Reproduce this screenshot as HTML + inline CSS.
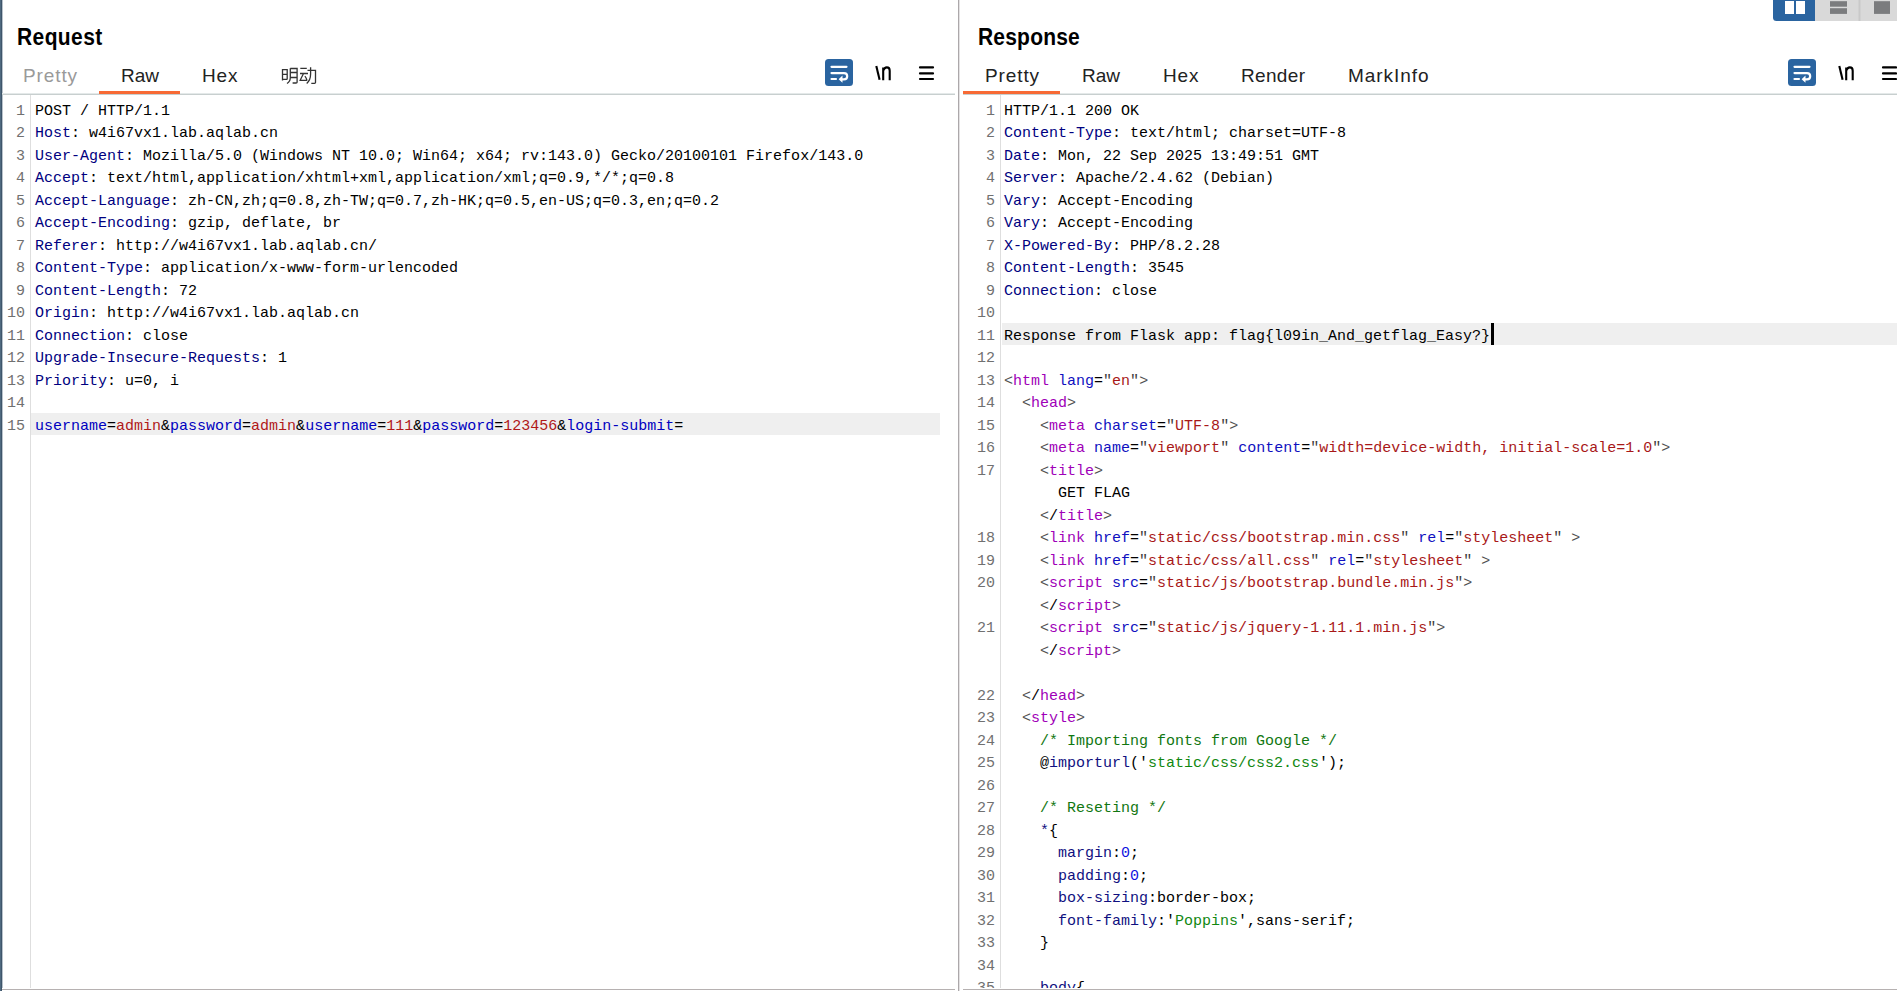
<!DOCTYPE html>
<html><head><meta charset="utf-8">
<style>
*{margin:0;padding:0;box-sizing:border-box}
html,body{width:1897px;height:991px;overflow:hidden;background:#fff}
body{position:relative;font-family:"Liberation Sans",sans-serif;color:#000}
.abs{position:absolute}
.strip{left:0;top:0;width:3px;height:991px;background:linear-gradient(to right,#506a80 0,#506a80 1px,#3f566b 1px,#3f566b 2px,#b9c3cc 2px,#b9c3cc 3px)}
.title{font-weight:bold;font-size:21px;letter-spacing:0.4px;transform:scaleY(1.1);transform-origin:0 0;line-height:22px;white-space:nowrap}
.tab{font-size:19px;line-height:20px;white-space:nowrap;color:#222}
.uline{height:3px;background:#f76a35}
.sep{height:2px;background:linear-gradient(#e4e9e9 50%,#c8cfcf 50%)}
.vdiv{left:958px;top:0;width:1px;height:991px;background:#aca8aa;box-shadow:1px 0 0 #e4e2e3}
.gutter{width:1px;background:#dedede}
.code{font-family:"Liberation Mono",monospace;font-size:15px;line-height:22.5px;white-space:pre;color:#000}
.ln{font-family:"Liberation Mono",monospace;font-size:15px;line-height:22.5px;white-space:pre;color:#707070;text-align:right}
.hl{background:#efefef;height:22px}
.bot{height:1px;background:#b6b1b1}
.h{color:#000080}
.pn{color:#0000c0}
.pv{color:#b01818}
.tg{color:#a000b8}
.br{color:#505050}
.q{color:#404040}
.an{color:#1010c0}
.av{color:#a81818}
.cm{color:#117711}
.cp{color:#101080}
.nb{color:#1010e0}
.st{color:#118811}
</style></head>
<body>
<div class="abs strip"></div>

<!-- LEFT PANEL -->
<div class="abs title" style="left:17px;top:25px">Request</div>
<div class="abs tab" style="left:23px;top:66px;color:#9a9a9a;letter-spacing:0.9px">Pretty</div>
<div class="abs tab" style="left:121px;top:66px">Raw</div>
<div class="abs tab" style="left:202px;top:66px;letter-spacing:0.8px">Hex</div>
<div class="abs uline" style="left:99px;top:91px;width:81px;z-index:2"></div>
<div class="abs sep" style="left:2px;top:93px;width:953px"></div>

<div class="abs gutter" style="left:30px;top:95px;height:893px"></div>
<div class="abs hl" style="left:31px;top:413px;width:909px"></div>
<div class="abs ln" style="left:0;top:100.5px;width:25px">1
2
3
4
5
6
7
8
9
10
11
12
13
14
15</div>
<div class="abs code" style="left:35px;top:100.5px">POST / HTTP/1.1
<span class="h">Host</span>: w4i67vx1.lab.aqlab.cn
<span class="h">User-Agent</span>: Mozilla/5.0 (Windows NT 10.0; Win64; x64; rv:143.0) Gecko/20100101 Firefox/143.0
<span class="h">Accept</span>: text/html,application/xhtml+xml,application/xml;q=0.9,*/*;q=0.8
<span class="h">Accept-Language</span>: zh-CN,zh;q=0.8,zh-TW;q=0.7,zh-HK;q=0.5,en-US;q=0.3,en;q=0.2
<span class="h">Accept-Encoding</span>: gzip, deflate, br
<span class="h">Referer</span>: http://w4i67vx1.lab.aqlab.cn/
<span class="h">Content-Type</span>: application/x-www-form-urlencoded
<span class="h">Content-Length</span>: 72
<span class="h">Origin</span>: http://w4i67vx1.lab.aqlab.cn
<span class="h">Connection</span>: close
<span class="h">Upgrade-Insecure-Requests</span>: 1
<span class="h">Priority</span>: u=0, i

<span class="pn">username</span>=<span class="pv">admin</span>&amp;<span class="pn">password</span>=<span class="pv">admin</span>&amp;<span class="pn">username</span>=<span class="pv">111</span>&amp;<span class="pn">password</span>=<span class="pv">123456</span>&amp;<span class="pn">login-submit</span>=</div>

<div class="abs vdiv" style="z-index:7"></div>
<div class="abs" style="left:2px;top:988px;width:1895px;height:3px;background:#fff;z-index:5"></div>
<div class="abs bot" style="left:2px;top:989px;width:953px;z-index:6"></div>
<div class="abs bot" style="left:963px;top:989px;width:934px;z-index:6"></div>

<!-- RIGHT PANEL -->
<div class="abs title" style="left:978px;top:25px;letter-spacing:0.2px">Response</div>
<div class="abs tab" style="left:985px;top:66px;letter-spacing:0.9px">Pretty</div>
<div class="abs tab" style="left:1082px;top:66px">Raw</div>
<div class="abs tab" style="left:1163px;top:66px;letter-spacing:0.8px">Hex</div>
<div class="abs tab" style="left:1241px;top:66px;letter-spacing:0.34px">Render</div>
<div class="abs tab" style="left:1348px;top:66px;letter-spacing:0.94px">MarkInfo</div>
<div class="abs uline" style="left:963px;top:91px;width:97px;z-index:2"></div>
<div class="abs sep" style="left:963px;top:93px;width:934px"></div>
<div class="abs gutter" style="left:1000px;top:95px;height:893px"></div>
<div class="abs hl" style="left:1002px;top:323px;width:895px"></div>
<div class="abs" style="left:1491px;top:323px;width:3px;height:22px;background:#000"></div>
<div class="abs ln" style="left:960px;top:100.5px;width:35px">1
2
3
4
5
6
7
8
9
10
11
12
13
14
15
16
17


18
19
20

21


22
23
24
25
26
27
28
29
30
31
32
33
34
35</div>
<div class="abs code" style="left:1004px;top:100.5px">HTTP/1.1 200 OK
<span class="h">Content-Type</span>: text/html; charset=UTF-8
<span class="h">Date</span>: Mon, 22 Sep 2025 13:49:51 GMT
<span class="h">Server</span>: Apache/2.4.62 (Debian)
<span class="h">Vary</span>: Accept-Encoding
<span class="h">Vary</span>: Accept-Encoding
<span class="h">X-Powered-By</span>: PHP/8.2.28
<span class="h">Content-Length</span>: 3545
<span class="h">Connection</span>: close

Response from Flask app: flag{l09in_And_getflag_Easy?}

<span class="br">&lt;</span><span class="tg">html</span> <span class="an">lang</span>=<span class="q">"</span><span class="av">en</span><span class="q">"</span><span class="br">&gt;</span>
  <span class="br">&lt;</span><span class="tg">head</span><span class="br">&gt;</span>
    <span class="br">&lt;</span><span class="tg">meta</span> <span class="an">charset</span>=<span class="q">"</span><span class="av">UTF-8</span><span class="q">"</span><span class="br">&gt;</span>
    <span class="br">&lt;</span><span class="tg">meta</span> <span class="an">name</span>=<span class="q">"</span><span class="av">viewport</span><span class="q">"</span> <span class="an">content</span>=<span class="q">"</span><span class="av">width=device-width, initial-scale=1.0</span><span class="q">"</span><span class="br">&gt;</span>
    <span class="br">&lt;</span><span class="tg">title</span><span class="br">&gt;</span>
      GET FLAG
    <span class="br">&lt;</span>/<span class="tg">title</span><span class="br">&gt;</span>
    <span class="br">&lt;</span><span class="tg">link</span> <span class="an">href</span>=<span class="q">"</span><span class="av">static/css/bootstrap.min.css</span><span class="q">"</span> <span class="an">rel</span>=<span class="q">"</span><span class="av">stylesheet</span><span class="q">"</span> <span class="br">&gt;</span>
    <span class="br">&lt;</span><span class="tg">link</span> <span class="an">href</span>=<span class="q">"</span><span class="av">static/css/all.css</span><span class="q">"</span> <span class="an">rel</span>=<span class="q">"</span><span class="av">stylesheet</span><span class="q">"</span> <span class="br">&gt;</span>
    <span class="br">&lt;</span><span class="tg">script</span> <span class="an">src</span>=<span class="q">"</span><span class="av">static/js/bootstrap.bundle.min.js</span><span class="q">"</span><span class="br">&gt;</span>
    <span class="br">&lt;</span>/<span class="tg">script</span><span class="br">&gt;</span>
    <span class="br">&lt;</span><span class="tg">script</span> <span class="an">src</span>=<span class="q">"</span><span class="av">static/js/jquery-1.11.1.min.js</span><span class="q">"</span><span class="br">&gt;</span>
    <span class="br">&lt;</span>/<span class="tg">script</span><span class="br">&gt;</span>

  <span class="br">&lt;</span>/<span class="tg">head</span><span class="br">&gt;</span>
  <span class="br">&lt;</span><span class="tg">style</span><span class="br">&gt;</span>
    <span class="cm">/* Importing fonts from Google */</span>
    @<span class="cp">importurl</span>('<span class="st">static/css/css2.css</span>');

    <span class="cm">/* Reseting */</span>
    <span class="cp">*</span>{
      <span class="cp">margin</span>:<span class="nb">0</span>;
      <span class="cp">padding</span>:<span class="nb">0</span>;
      <span class="cp">box-sizing</span>:border-box;
      <span class="cp">font-family</span>:'<span class="st">Poppins</span>',sans-serif;
    }

    <span class="cp">body</span>{</div>

<svg class="abs" style="left:0;top:0;z-index:10" width="1897" height="991" viewBox="0 0 1897 991">
<g fill="none" stroke="#333" stroke-width="1.3" stroke-linecap="butt">
<path d="M282.5,69.1V80.6M282.5,69.7H287.2V79.5M282.5,74.3H287.2M282.5,79.3H287.2"/>
<path d="M290.3,68.3V77.5Q290.3,81.5 287,83.5M290.3,68.5H297.1V82.3Q297.1,83 296,83H292.6M290.3,72.5H297.1M290.3,77.5H297.1"/>
<path d="M300.3,68.4H306.8M300,73.5H308M303.3,74Q301.5,77.5 300.2,80.3H307.2M304.9,76.2Q306.3,78 307,80.5"/>
<path d="M307.5,70.4H315.5V82.5Q315.5,83.3 314.5,83.3H311.3M310.6,67.2V74Q310.6,80 306.7,83.5"/>
</g>
<g>
<rect x="825" y="59" width="28" height="27" rx="3.5" fill="#2a64a0"/>
<g stroke="#fff" stroke-width="2.2" stroke-linecap="round" fill="none">
<path d="M831.5,66.8H846.5M831.5,73.1H844Q847.2,73.1 847.2,76.3Q847.2,79.4 844,79.4H841.5M831.5,79H836"/>
</g>
<path d="M838.6,79.2L842.5,75.6V82.8Z" fill="#fff"/>
<g stroke="#000" stroke-width="2.1" fill="none">
<path d="M876.3,66L879.6,79.8"/>
<path d="M883.2,80.2V67.4M883.2,70.6Q884.4,67.4 886.8,67.4Q889.7,67.4 889.7,70.8V80.2"/>
</g>
<g stroke="#000" stroke-width="2.2" stroke-linecap="round">
<path d="M920,67.4H933M920,73.4H933M920,79H933"/>
</g>
</g>
<g transform="translate(963,0)">
<rect x="825" y="59" width="28" height="27" rx="3.5" fill="#2a64a0"/>
<g stroke="#fff" stroke-width="2.2" stroke-linecap="round" fill="none">
<path d="M831.5,66.8H846.5M831.5,73.1H844Q847.2,73.1 847.2,76.3Q847.2,79.4 844,79.4H841.5M831.5,79H836"/>
</g>
<path d="M838.6,79.2L842.5,75.6V82.8Z" fill="#fff"/>
<g stroke="#000" stroke-width="2.1" fill="none">
<path d="M876.3,66L879.6,79.8"/>
<path d="M883.2,80.2V67.4M883.2,70.6Q884.4,67.4 886.8,67.4Q889.7,67.4 889.7,70.8V80.2"/>
</g>
<g stroke="#000" stroke-width="2.2" stroke-linecap="round">
<path d="M920,67.4H933M920,73.4H933M920,79H933"/>
</g>
</g>

<rect x="1815" y="0" width="82" height="21" fill="#d9d9d9"/>
<rect x="1858.5" y="0" width="2" height="21" fill="#c9c9c9"/>
<path d="M1773,0H1815V21H1776.5Q1773,21 1773,17.5Z" fill="#2a64a0"/>
<rect x="1785" y="1" width="9" height="13" fill="#fff"/>
<rect x="1796" y="1" width="9" height="13" fill="#fff"/>
<rect x="1830" y="1.2" width="17" height="5.5" fill="#7b7c7e"/>
<rect x="1830" y="8.2" width="17" height="5.7" fill="#7b7c7e"/>
<rect x="1874" y="1.2" width="16" height="12.7" fill="#7b7c7e"/>
</svg>
</body></html>
